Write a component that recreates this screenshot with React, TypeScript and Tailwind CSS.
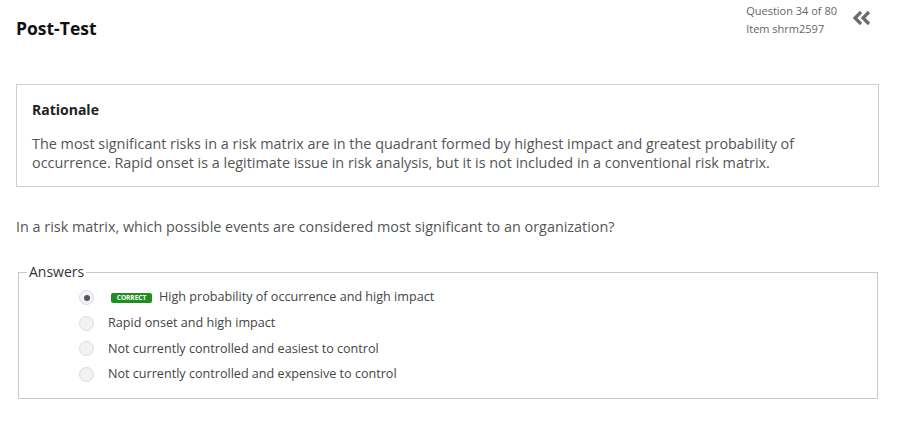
import React from "react";

const answers = [
  { text: "High probability of occurrence and high impact", checked: true, correct: true },
  { text: "Rapid onset and high impact", checked: false, correct: false },
  { text: "Not currently controlled and easiest to control", checked: false, correct: false },
  { text: "Not currently controlled and expensive to control", checked: false, correct: false },
];

const Radio = ({ checked }: { checked: boolean }) => (
  <span className="w-[15px] h-[15px] rounded-full border border-[#dcdcdc] bg-[#f2f2f2] flex items-center justify-center shrink-0">
    {checked && <span className="w-[6px] h-[6px] rounded-full bg-[#4b5563]" />}
  </span>
);

export default function App() {
  return (
    <div className="w-[902px] h-[437px] bg-white font-['Open_Sans',sans-serif] text-[#555]">
      <header className="flex justify-between pl-4 pr-[30px]">
        <h1 className="pt-[16px] text-[17.5px] font-bold text-[#111] leading-6">Post-Test</h1>
        <div className="flex items-start pt-[2px]">
          <div className="text-[11px] leading-[18px] text-[#666]">
            <div>Question 34 of 80</div>
            <div>Item shrm2597</div>
          </div>
          <svg className="ml-[15px] mt-[8px]" width="20" height="16" viewBox="0 0 20 16">
            <path d="M9 2 L3 8 L9 14" fill="none" stroke="#6b6b6b" strokeWidth="3.2" strokeLinejoin="miter" />
            <path d="M17 2 L11 8 L17 14" fill="none" stroke="#6b6b6b" strokeWidth="3.2" strokeLinejoin="miter" />
          </svg>
        </div>
      </header>

      <section className="mt-[44px] mx-4 w-[863px] border border-[#cfcfcf] px-[15px] pt-[15px] pb-[14px]">
        <h2 className="text-[14px] font-bold text-[#222] leading-5">Rationale</h2>
        <p className="mt-[14px] max-w-[775px] text-[14.4px] leading-[19px] text-[#555]">
          The most significant risks in a risk matrix are in the quadrant formed by highest impact and greatest probability of
          occurrence. Rapid onset is a legitimate issue in risk analysis, but it is not included in a conventional risk matrix.
        </p>
      </section>

      <p className="mt-[30px] ml-4 text-[14.4px] leading-5 text-[#555]">
        In a risk matrix, which possible events are considered most significant to an organization?
      </p>

      <fieldset className="mt-[27px] ml-[18px] w-[860px] border border-[#c8c8c8] pt-[5px] pb-[11px]">
        <legend className="ml-[8px] px-[2px] text-[14px] leading-4 text-[#333]">Answers</legend>
        <ul className="flex flex-col pl-[60px]">
          {answers.map((a) => (
            <li key={a.text} className="flex items-center h-[25.6px]">
              <Radio checked={a.checked} />
              <span className="ml-[14px] flex items-center text-[12.6px] text-[#444]">
                {a.correct && (
                  <span className="ml-[3px] mr-[7px] w-[41px] h-[10px] flex items-center justify-center bg-[#1f8f1f] text-white text-[6.5px] font-bold leading-none rounded-[2px]">
                    CORRECT
                  </span>
                )}
                {a.text}
              </span>
            </li>
          ))}
        </ul>
      </fieldset>
    </div>
  );
}
